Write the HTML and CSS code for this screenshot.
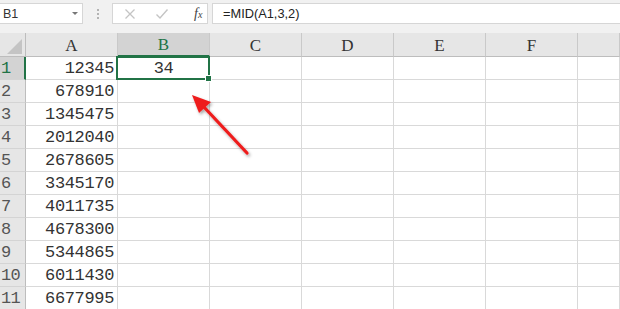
FILE: index.html
```html
<!DOCTYPE html>
<html lang="en">
<head>
    <meta charset="UTF-8">
    <title>Sheet1</title>
    <link rel="stylesheet" href="styles.css">
</head>
<body>
    <div class="formula-bar">
        <div class="name-box">
            <span>B1</span>
            <span class="drop-arrow"></span>
        </div>
        <div class="grip">
            <i></i><i></i><i></i>
        </div>
        <div class="fx-box">
            <svg class="fx-icon" width="12" height="12" viewBox="0 0 12 12">
                <path d="M1.5 1.5 L10.5 10.5 M10.5 1.5 L1.5 10.5" stroke="#c4c4c4" stroke-width="1.3" fill="none"/>
            </svg>
            <svg class="fx-icon" width="14" height="12" viewBox="0 0 14 12">
                <path d="M1.5 6.5 L5 10 L12.5 1.5" stroke="#c4c4c4" stroke-width="1.4" fill="none"/>
            </svg>
            <span class="fx">f<small>x</small></span>
        </div>
        <div class="formula-input">=MID(A1,3,2)</div>
    </div>

    <div class="sheet" id="sheet">
        <div class="corner"><span></span></div>
        <div class="col-head">A</div>
        <div class="col-head selected">B</div>
        <div class="col-head">C</div>
        <div class="col-head">D</div>
        <div class="col-head">E</div>
        <div class="col-head">F</div>
        <div class="col-head"></div>
        <!-- rows are filled in by the script below -->
    </div>

    <svg class="arrow" width="620" height="309" viewBox="0 0 620 309">
        <defs>
            <filter id="shade" x="-20%" y="-20%" width="140%" height="140%">
                <feDropShadow dx="1.5" dy="2" stdDeviation="1.5" flood-color="#000" flood-opacity="0.35"/>
            </filter>
        </defs>
        <g filter="url(#shade)" fill="#ee1c1c">
            <path d="M247 153 L203 106" stroke="#ee1c1c" stroke-width="3.2" stroke-linecap="round"/>
            <polygon points="192,95 211,102 199,113"/>
        </g>
    </svg>

    <script>
        const columnA = [12345, 678910, 1345475, 2012040, 2678605, 3345170,
                         4011735, 4678300, 5344865, 6011430, 6677995];

        const sheet = document.getElementById('sheet');

        columnA.forEach((value, i) => {
            const row = i + 1;
            const head = document.createElement('div');
            head.className = 'row-head' + (row === 1 ? ' selected' : '');
            head.textContent = row;
            sheet.appendChild(head);

            const a = document.createElement('div');
            a.className = 'cell num';
            a.textContent = value;
            sheet.appendChild(a);

            const b = document.createElement('div');
            b.className = 'cell';
            if (row === 1) {
                b.className = 'cell center active';
                b.innerHTML = '34<span class="handle"></span>';
            }
            sheet.appendChild(b);

            // empty cells C..G
            for (let c = 0; c < 5; c++) {
                const empty = document.createElement('div');
                empty.className = 'cell';
                sheet.appendChild(empty);
            }
        });
    </script>
</body>
</html>
```

FILE: styles.css
```css
body {
    margin: 0;
    width: 620px;
    height: 309px;
    overflow: hidden;
    position: relative;
    background: #ffffff;
    font-family: 'Liberation Mono', monospace;
    color: #222;
}

/* formula bar */
.formula-bar {
    height: 33px;
    box-sizing: border-box;
    padding-top: 3px;
    background: #f1f1f1;
    display: flex;
    align-items: flex-start;
    font-family: 'Liberation Sans', Arial, sans-serif;
}

.name-box {
    width: 83px;
    height: 21px;
    box-sizing: border-box;
    background: #fff;
    border: 1px solid #d6d6d6;
    border-left: none;
    display: flex;
    align-items: center;
    justify-content: space-between;
    padding: 0 4px 0 3px;
    font-size: 12.5px;
    color: #333;
}

.drop-arrow {
    width: 0;
    height: 0;
    border-left: 3px solid transparent;
    border-right: 3px solid transparent;
    border-top: 3px solid #777;
}

.grip {
    width: 29px;
    height: 21px;
    display: flex;
    flex-direction: column;
    align-items: center;
    justify-content: center;
    gap: 2px;
}

.grip i {
    width: 2px;
    height: 2px;
    background: #b3b3b3;
}

.fx-box {
    width: 96px;
    height: 21px;
    box-sizing: border-box;
    background: #fff;
    border: 1px solid #d6d6d6;
    display: flex;
    align-items: center;
    padding-left: 11px;
    gap: 19px;
}

.fx {
    font-family: 'Liberation Serif', serif;
    font-style: italic;
    font-size: 14px;
    color: #444;
    margin-left: 6px;
}

.fx small {
    font-size: 10px;
}

.formula-input {
    flex: 1;
    margin-left: 4px;
    height: 21px;
    box-sizing: border-box;
    background: #fff;
    border: 1px solid #d6d6d6;
    border-right: none;
    padding-left: 10px;
    font-size: 12.8px;
    line-height: 19px;
    color: #222;
}

/* grid */
.sheet {
    display: grid;
    grid-template-columns: 26px 92px 92px 92px 92px 92px 92px 1fr;
    grid-template-rows: 24px;
    grid-auto-rows: 23px;
}

.corner {
    background: #e6e6e6;
    border-right: 1px solid #bdbdbd;
    border-bottom: 1px solid #bdbdbd;
    position: relative;
}

.corner span {
    position: absolute;
    right: 3px;
    bottom: 2px;
    width: 0;
    height: 0;
    border-left: 15px solid transparent;
    border-bottom: 15px solid #c4c4c4;
}

.col-head {
    background: #e6e6e6;
    border-right: 1px solid #c9c9c9;
    border-bottom: 1px solid #bdbdbd;
    text-align: center;
    font-family: 'Liberation Serif', serif;
    font-size: 17px;
    line-height: 25px;
    color: #333;
}

.col-head.selected {
    background: #d3d3d3;
    color: #217346;
    border-bottom: 2px solid #217346;
    line-height: 24px;
}

.row-head {
    background: #e6e6e6;
    border-right: 1px solid #bdbdbd;
    border-bottom: 1px solid #d4d4d4;
    padding-left: 1px;
    font-size: 17px;
    letter-spacing: -0.6px;
    line-height: 24px;
    color: #555;
}

.row-head.selected {
    background: #d3d3d3;
    color: #217346;
    border-right: 2px solid #217346;
}

.cell {
    border-right: 1px solid #d9d9d9;
    border-bottom: 1px solid #d9d9d9;
    font-size: 17px;
    letter-spacing: -0.35px;
    line-height: 24px;
    color: #333;
}

.cell.num {
    text-align: right;
    padding-right: 3px;
}

.cell.center {
    text-align: center;
}

.cell.active {
    position: relative;
}

.cell.active::after {
    content: '';
    position: absolute;
    left: -2px;
    top: -1px;
    right: -1px;
    bottom: -1px;
    border: 2px solid #217346;
}

.handle {
    position: absolute;
    right: -3px;
    bottom: -3px;
    width: 5px;
    height: 5px;
    background: #217346;
    border: 1px solid #fff;
    z-index: 1;
}

.arrow {
    position: absolute;
    left: 0;
    top: 0;
    pointer-events: none;
}
```
